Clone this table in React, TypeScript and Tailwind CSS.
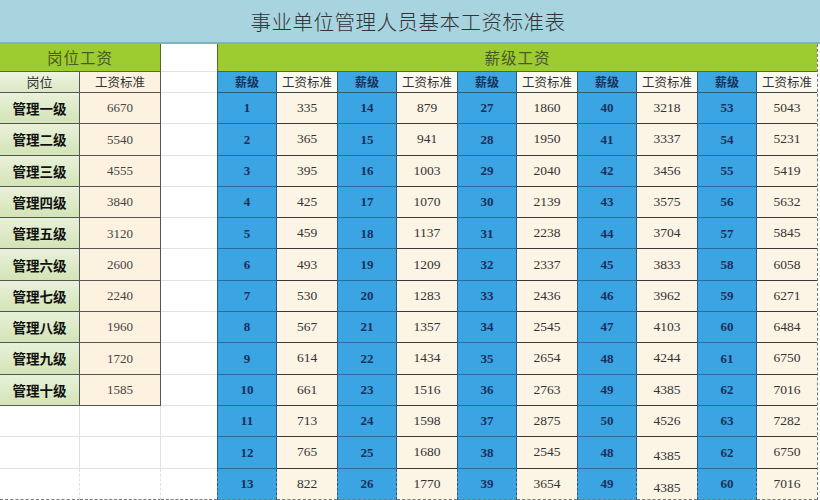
const posts = [
  ["管理一级", "6670"],
  ["管理二级", "5540"],
  ["管理三级", "4555"],
  ["管理四级", "3840"],
  ["管理五级", "3120"],
  ["管理六级", "2600"],
  ["管理七级", "2240"],
  ["管理八级", "1960"],
  ["管理九级", "1720"],
  ["管理十级", "1585"],
];

const grades = [
  ["1", "335", "14", "879", "27", "1860", "40", "3218", "53", "5043"],
  ["2", "365", "15", "941", "28", "1950", "41", "3337", "54", "5231"],
  ["3", "395", "16", "1003", "29", "2040", "42", "3456", "55", "5419"],
  ["4", "425", "17", "1070", "30", "2139", "43", "3575", "56", "5632"],
  ["5", "459", "18", "1137", "31", "2238", "44", "3704", "57", "5845"],
  ["6", "493", "19", "1209", "32", "2337", "45", "3833", "58", "6058"],
  ["7", "530", "20", "1283", "33", "2436", "46", "3962", "59", "6271"],
  ["8", "567", "21", "1357", "34", "2545", "47", "4103", "60", "6484"],
  ["9", "614", "22", "1434", "35", "2654", "48", "4244", "61", "6750"],
  ["10", "661", "23", "1516", "36", "2763", "49", "4385", "62", "7016"],
  ["11", "713", "24", "1598", "37", "2875", "50", "4526", "63", "7282"],
  ["12", "765", "25", "1680", "38", "2545", "48", "4385", "62", "6750"],
  ["13", "822", "26", "1770", "39", "3654", "49", "4385", "60", "7016"],
];

const cjk = "font-['Noto_Sans_CJK_SC',sans-serif]";
const serif = "font-['Liberation_Serif','Noto_Sans_CJK_SC',serif]";

export default function App() {
  return (
    <div className="w-[820px] h-[500px] overflow-hidden bg-white">
      <div className="flex h-[44px] items-center justify-center border-b-2 border-[#7fb1c2] bg-[#a8d4e0]">
        <h1 className={`${cjk} pr-1 text-[20.5px] font-light tracking-[0.5px] text-[#333]`}>事业单位管理人员基本工资标准表</h1>
      </div>

      <div className="grid w-[818px] grid-cols-[80px_81px_56px_repeat(10,1fr)] grid-rows-[28px_21px_repeat(13,31.3px)] border-r border-dashed border-[#777]">
        {/* group headers */}
        <div className={`${cjk} col-span-2 flex items-center justify-center border-b border-r border-[#4f6a2a] bg-[#9dcc30] text-[15.5px] tracking-[1px] text-[#4b5a25]`}>
          岗位工资
        </div>
        <div className="border-b border-[#e2e2e2]" />
        <div className={`${cjk} col-span-10 flex items-center justify-center border-b border-l border-[#4f6a2a] bg-[#9dcc30] text-[15.5px] tracking-[1px] text-[#4b5a25]`}>
          薪级工资
        </div>

        {/* column headers */}
        <div className={`${cjk} flex items-center justify-center border-b border-r border-[#555] bg-gradient-to-b from-[#eef4e2] to-[#dbe8c4] text-[13px] text-[#333]`}>
          岗位
        </div>
        <div className={`${cjk} flex items-center justify-center border-b border-r border-[#555] bg-[#fdf1e0] text-[12.5px] text-[#333]`}>
          工资标准
        </div>
        <div className="border-b border-[#e2e2e2]" />
        {Array.from({ length: 10 }).map((_, i) =>
          i % 2 === 0 ? (
            <div key={i} className={`${cjk} flex items-center justify-center border-x border-b border-[#2c5a78] bg-[#3ca7e3] text-[12px] font-bold text-[#17305a]`}>
              薪级
            </div>
          ) : (
            <div key={i} className={`${cjk} flex items-center justify-center border-b border-[#444] bg-[#fdfaf2] text-[12.5px] text-[#333]`}>
              工资标准
            </div>
          )
        )}

        {/* data rows */}
        {grades.map((row, r) => {
          const post = posts[r];
          const last = r === grades.length - 1;
          return [
            post ? (
              <div key={`p${r}`} className={`${cjk} flex items-center justify-center border-b border-r border-[#555] bg-gradient-to-b from-[#e9f1da] to-[#d3e4b6] text-[13.5px] font-bold text-[#111]`}>
                {post[0]}
              </div>
            ) : (
              <div key={`p${r}`} className={`border-r border-[#e2e2e2] ${last ? "border-b border-b-[#777] border-dashed" : "border-b"}`} />
            ),
            post ? (
              <div key={`s${r}`} className={`${serif} flex items-center justify-center border-b border-r border-[#555] bg-[#fdf1df] text-[13px] text-[#444]`}>
                {post[1]}
              </div>
            ) : (
              <div key={`s${r}`} className={`border-r border-[#e2e2e2] ${last ? "border-b border-b-[#777] border-dashed" : "border-b"}`} />
            ),
            <div key={`g${r}`} className={`${last ? "border-b border-dashed border-[#777]" : "border-b border-[#e2e2e2]"}`} />,
            ...row.map((v, c) =>
              c % 2 === 0 ? (
                <div
                  key={`${r}-${c}`}
                  className={`${serif} flex items-center justify-center border-x border-[#2c5a78] bg-[#3aa5e2] text-[13px] font-bold text-[#1a2f5c] ${last ? "border-b border-b-[#777] border-dashed" : "border-b border-b-[#2a6d98]"}`}
                >
                  {v}
                </div>
              ) : (
                <div
                  key={`${r}-${c}`}
                  className={`${serif} flex justify-center bg-[#fcf4e5] text-[13.5px] text-[#333] ${r >= 11 && c === 7 ? "items-end pb-[1px]" : "items-center"} ${last ? "border-b border-dashed border-[#777]" : "border-b border-[#3a3a3a]"}`}
                >
                  {v}
                </div>
              )
            ),
          ];
        })}
      </div>
    </div>
  );
}
